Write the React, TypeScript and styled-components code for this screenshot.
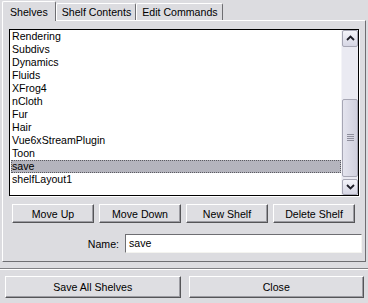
import React from 'react';
import styled, { createGlobalStyle } from 'styled-components';

const GlobalStyle = createGlobalStyle`
    html, body {
        margin: 0;
        padding: 0;
        background: #dcdce0;
    }
    body {
        font-family: 'Liberation Sans', Arial, sans-serif;
        font-size: 10.6px;
        color: #000;
    }
`;

const Window = styled.div`
    width: 368px;
    height: 303px;
    box-sizing: border-box;
    background: #dcdce0;
    display: flex;
    flex-direction: column;
`;

const TabBar = styled.div`
    display: flex;
    align-items: flex-end;
    height: 20px;
    padding-left: 2px;
    position: relative;
    z-index: 1;
`;

const Tab = styled.div<{ active?: boolean }>`
    box-sizing: border-box;
    height: ${({ active }) => (active ? '20px' : '17px')};
    padding: ${({ active }) => (active ? '4px 7px 0 7px' : '2px 4px 0 5px')};
    margin-bottom: ${({ active }) => (active ? '-1px' : '0')};
    background: #dcdce0;
    border-top: 1px solid #ffffff;
    border-left: 1px solid #ffffff;
    border-right: 1px solid #6e6e72;
    border-radius: 2px 2px 0 0;
    white-space: nowrap;
    line-height: 13px;
`;

const Panel = styled.div`
    margin: 0 2px;
    height: 242px;
    box-sizing: border-box;
    border-top: 1px solid #ffffff;
    border-left: 1px solid #ffffff;
    border-right: 1px solid #6e6e72;
    border-bottom: 1px solid #6e6e72;
    padding: 8px 6px 0 6px;
    display: flex;
    flex-direction: column;
`;

const ListBox = styled.div`
    height: 167px;
    box-sizing: border-box;
    border: 1px solid #000;
    box-shadow: 1px 1px 0 #ffffff;
    background: #ffffff;
    display: flex;
`;

const Items = styled.div`
    flex: 1;
    padding: 0 0 0 1px;
`;

const Item = styled.div<{ selected?: boolean }>`
    height: 13px;
    line-height: 13px;
    padding-left: 1px;
    box-sizing: border-box;
    white-space: nowrap;
    background: ${({ selected }) => (selected ? '#b4b4bd' : 'transparent')};
    outline: ${({ selected }) => (selected ? '1px dotted #5a5a60' : 'none')};
    outline-offset: -1px;
`;

const ScrollBar = styled.div`
    width: 16px;
    display: flex;
    flex-direction: column;
    background: #eaeaf2;
    border-left: 1px solid #f4f4f8;
`;

const ArrowButton = styled.div`
    height: 17px;
    box-sizing: border-box;
    border: 1px solid #a6a6b4;
    border-radius: 2px;
    background: linear-gradient(#f4f4fa, #d6d6e4);
    display: flex;
    align-items: center;
    justify-content: center;
`;

const Track = styled.div`
    flex: 1;
    display: flex;
    flex-direction: column;
    padding-top: 52px;
    padding-bottom: 2px;
`;

const Thumb = styled.div`
    height: 78px;
    box-sizing: border-box;
    border: 1px solid #a6a6b4;
    border-radius: 2px;
    background: linear-gradient(90deg, #e4e4ee, #d0d0de);
    display: flex;
    align-items: center;
    justify-content: center;
`;

const Grip = styled.div`
    width: 7px;
    height: 7px;
    background: repeating-linear-gradient(#8e8e9c 0 1px, transparent 1px 2px);
`;

const ButtonRow = styled.div`
    display: flex;
    gap: 5px;
    margin: 8px 4px 0 3px;
`;

const Button = styled.button<{ wide?: boolean }>`
    flex: 1;
    height: ${({ wide }) => (wide ? '22px' : '19px')};
    box-sizing: border-box;
    font-family: inherit;
    font-size: 10.6px;
    color: #000;
    padding: 0;
    background: #dedee2;
    border-top: 1px solid #ffffff;
    border-left: 1px solid #ffffff;
    border-right: 1px solid #555558;
    border-bottom: 1px solid #555558;
    box-shadow: inset -1px -1px 0 #9c9ca2;
`;

const NameRow = styled.div`
    display: flex;
    align-items: center;
    justify-content: flex-end;
    gap: 6px;
    margin-top: 11px;
    margin-right: -3px;
`;

const NameInput = styled.div`
    width: 237px;
    height: 19px;
    box-sizing: border-box;
    background: #ffffff;
    border-top: 1px solid #6e6e72;
    border-left: 1px solid #6e6e72;
    border-right: 1px solid #f4f4f0;
    border-bottom: 1px solid #f4f4f0;
    padding: 2px 0 0 3px;
    line-height: 13px;
`;

const Separator = styled.div`
    margin-top: 6px;
    height: 1px;
    background: #808084;
    border-bottom: 1px solid #ffffff;
`;

const BottomRow = styled.div`
    display: flex;
    gap: 8px;
    margin: 6px 4px 0 5px;
`;

const shelves = [
    'Rendering',
    'Subdivs',
    'Dynamics',
    'Fluids',
    'XFrog4',
    'nCloth',
    'Fur',
    'Hair',
    'Vue6xStreamPlugin',
    'Toon',
    'save',
    'shelfLayout1',
];

const Chevron: React.FC<{ down?: boolean }> = ({ down }) => (
    <svg width="9" height="6" viewBox="0 0 9 6">
        <path
            d={down ? 'M1 1 L4.5 4.5 L8 1' : 'M1 5 L4.5 1.5 L8 5'}
            fill="none"
            stroke="#1e1e28"
            strokeWidth="1.8"
        />
    </svg>
);

const App: React.FC = () => {
    return (
        <>
            <GlobalStyle />
            <Window>
                <TabBar>
                    <Tab active>Shelves</Tab>
                    <Tab>Shelf Contents</Tab>
                    <Tab>Edit Commands</Tab>
                </TabBar>
                <Panel>
                    <ListBox>
                        <Items>
                            {shelves.map((name) => (
                                <Item key={name} selected={name === 'save'}>
                                    {name}
                                </Item>
                            ))}
                        </Items>
                        <ScrollBar>
                            <ArrowButton>
                                <Chevron />
                            </ArrowButton>
                            <Track>
                                <Thumb>
                                    <Grip />
                                </Thumb>
                            </Track>
                            <ArrowButton>
                                <Chevron down />
                            </ArrowButton>
                        </ScrollBar>
                    </ListBox>
                    <ButtonRow>
                        <Button>Move Up</Button>
                        <Button>Move Down</Button>
                        <Button>New Shelf</Button>
                        <Button>Delete Shelf</Button>
                    </ButtonRow>
                    <NameRow>
                        <span>Name:</span>
                        <NameInput>save</NameInput>
                    </NameRow>
                </Panel>
                <Separator />
                <BottomRow>
                    <Button wide>Save All Shelves</Button>
                    <Button wide>Close</Button>
                </BottomRow>
            </Window>
        </>
    );
};

export default App;
